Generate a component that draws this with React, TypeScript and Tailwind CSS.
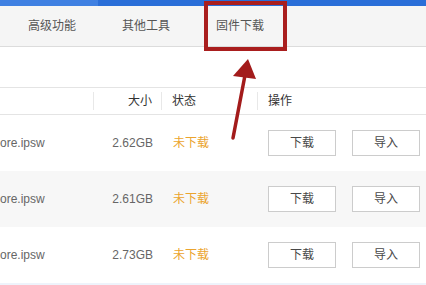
import React from 'react';

type Row = { name: string; size: string; shaded?: boolean };

const rows: Row[] = [
  { name: 'ore.ipsw', size: '2.62GB' },
  { name: 'ore.ipsw', size: '2.61GB', shaded: true },
  { name: 'ore.ipsw', size: '2.73GB' },
];

const ActionButton = ({ label }: { label: string }) => (
  <button className="w-[68px] h-[26px] border border-[#cccccc] bg-white text-[12px] text-[#484848] leading-none">
    {label}
  </button>
);

const FirmwareRow = ({ name, size, shaded }: Row) => (
  <div className={`flex h-[56px] items-center text-[12px] text-[#666] ${shaded ? 'bg-[#f7f7f7]' : 'bg-white'}`}>
    <div className="w-[94px] shrink-0">{name}</div>
    <div className="w-[68px] shrink-0 text-right pr-[9px]">{size}</div>
    <div className="w-[96px] shrink-0 pl-[11px] text-[#eba42e]">未下载</div>
    <div className="flex-1 flex gap-[16px] pl-[10px]">
      <ActionButton label="下载" />
      <ActionButton label="导入" />
    </div>
  </div>
);

export default function App() {
  return (
    <div
      className="relative w-[426px] h-[285px] overflow-hidden bg-white"
      style={{ fontFamily: '"Liberation Sans", "Noto Sans CJK SC", sans-serif' }}
    >
      {/* window top strip */}
      <div className="flex h-[6px]">
        <div className="w-[98px] bg-[#3f80e2]" />
        <div className="flex-1 bg-[#2a6ed8]" />
      </div>

      {/* Tabs */}
      <div className="flex h-[41px] items-center gap-[46px] pl-[28px] bg-[#f5f5f5] border-b border-[#dcdcdc] text-[12px] text-[#555]">
        <span>高级功能</span>
        <span>其他工具</span>
        <span className="relative">
          固件下载
          <span className="absolute left-[-12px] right-[-23px] top-[-16px] bottom-[-16px] border-[4px] border-[#a91e1e]" />
        </span>
      </div>

      <div className="h-[40px]" />

      {/* Table header */}
      <div className="flex h-[28px] items-center border-y border-[#e4e4e4] text-[12px] text-[#333]">
        <div className="w-[94px] shrink-0 h-[18px] border-r border-[#e8e8e8]" />
        <div className="w-[68px] shrink-0 h-[18px] flex items-center justify-end pr-[9px] border-r border-[#e8e8e8]">大小</div>
        <div className="w-[96px] shrink-0 h-[18px] flex items-center pl-[10px] border-r border-[#e8e8e8]">状态</div>
        <div className="flex-1 pl-[10px]">操作</div>
      </div>

      {rows.map((r, i) => (
        <FirmwareRow key={i} {...r} />
      ))}
      <div className="h-[4px] bg-[#eef3fb]" />

      {/* annotation arrow */}
      <svg className="absolute left-0 top-0 pointer-events-none" width="426" height="285">
        <line x1="233" y1="138" x2="246" y2="70" stroke="#a31b1b" strokeWidth="3.5" strokeLinecap="round" />
        <polygon points="248,59 233,76 256,79" fill="#a31b1b" />
      </svg>
    </div>
  );
}
